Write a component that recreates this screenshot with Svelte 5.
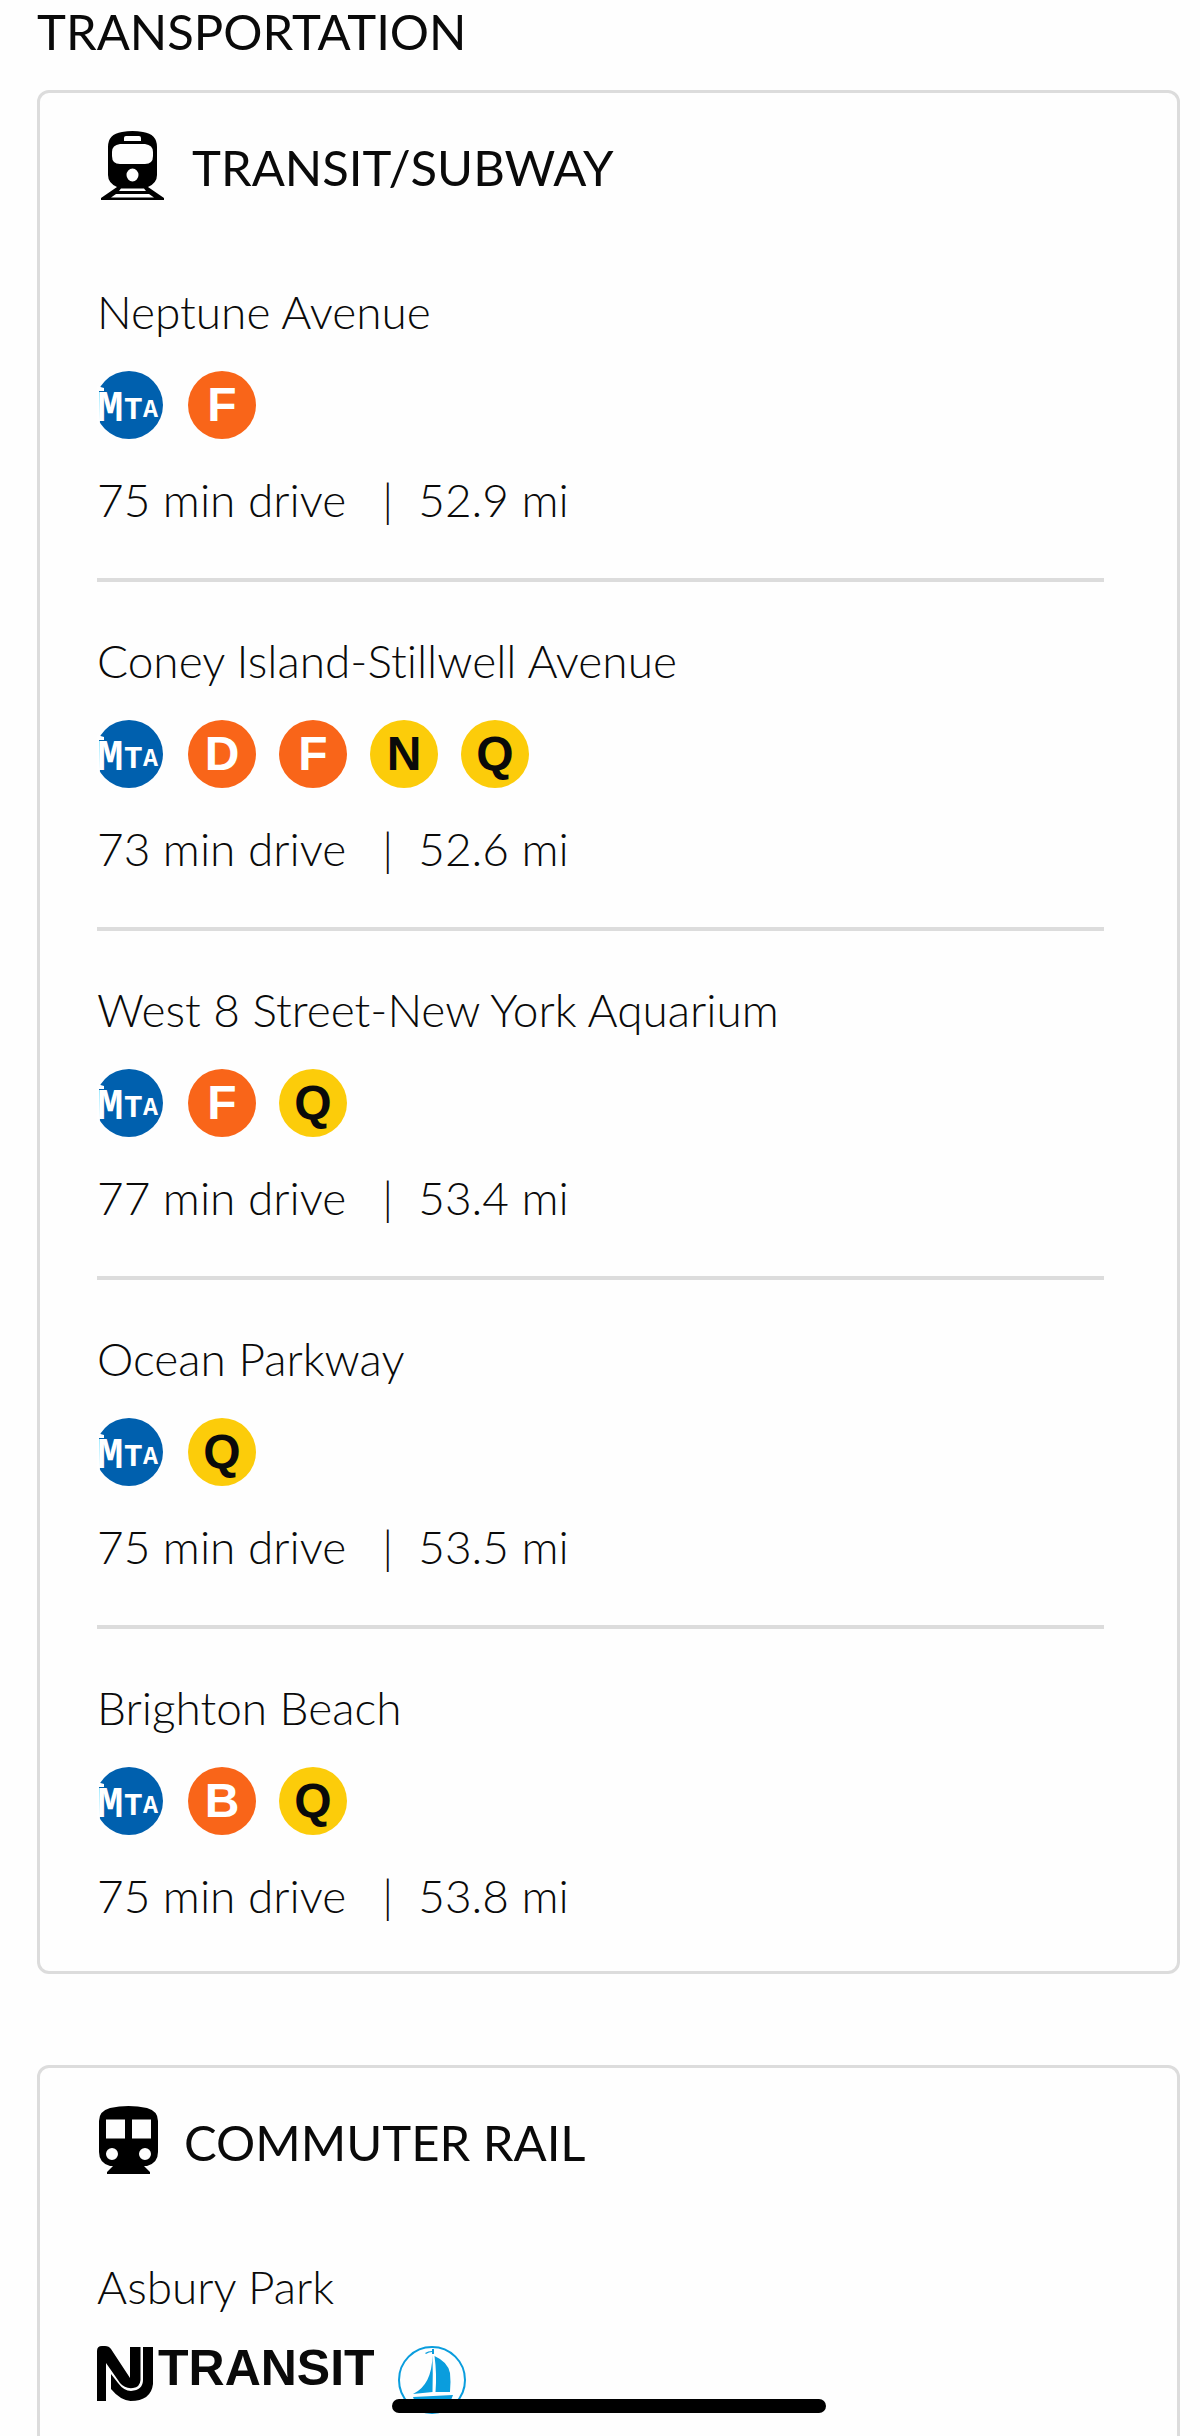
<script lang="ts">
	type Station = { name: string; lines: string[]; minutes: number; miles: string };

	const stations: Station[] = [
		{ name: 'Neptune Avenue', lines: ['F'], minutes: 75, miles: '52.9' },
		{ name: 'Coney Island-Stillwell Avenue', lines: ['D', 'F', 'N', 'Q'], minutes: 73, miles: '52.6' },
		{ name: 'West 8 Street-New York Aquarium', lines: ['F', 'Q'], minutes: 77, miles: '53.4' },
		{ name: 'Ocean Parkway', lines: ['Q'], minutes: 75, miles: '53.5' },
		{ name: 'Brighton Beach', lines: ['B', 'Q'], minutes: 75, miles: '53.8' }
	];

	const yellowLines = ['N', 'Q', 'R', 'W'];
</script>

{#snippet mta()}
	<svg class="mta" viewBox="0 0 68 68" role="img" aria-label="MTA">
		<circle cx="32" cy="34" r="34" fill="#0060ae" />
		<path d="M0 15 L7 17 L7 20 L2 20 L3 50 L2 53 L0 54 Z" fill="#fff" />
		<g class="mta-text" fill="#fff">
			<text x="0" y="50" font-size="44">M</text>
			<text x="27" y="48" font-size="31">T</text>
			<text x="46" y="46" font-size="25">A</text>
		</g>
	</svg>
{/snippet}

<main class="page">
	<h1>TRANSPORTATION</h1>

	<section class="card">
		<header class="card-head">
			<svg class="train" width="63" height="69" viewBox="0 0 63 69" aria-hidden="true">
				<path
					fill-rule="evenodd"
					d="M21 1 Q31.500 -1 42 1 Q56 3 56 16 V44 Q56 52 47 56 L63 67 V69 H0 V67 L16 56 Q7 52 7 44 V16 Q7 3 21 1 Z
					M25 5 Q23 5 23 7 V10 H40 V7 Q40 5 38 5 Z
					M19 13 Q11 14 11 21 V25 Q11 33 19 33 H44 Q52 33 52 25 V21 Q52 14 44 13 Z
					M31.500 37.500 A6 6.500 0 0 0 31.500 50.500 A6 6.500 0 0 0 31.500 37.500 Z
					M20 57.500 L18 60 H45 L43 57.500 Z
					M15 63 L10 66.500 H53 L48 63 Z"
				/>
			</svg>
			<h2>TRANSIT/SUBWAY</h2>
		</header>

		<ul class="stations">
			{#each stations as station (station.name)}
				<li class="station">
					<h3>{station.name}</h3>
					<div class="badges">
						{@render mta()}
						{#each station.lines as line (line)}
							<span class="line" class:yellow={yellowLines.includes(line)}>{line}</span>
						{/each}
					</div>
					<p class="meta">
						<span>{station.minutes} min drive</span>
						<span class="bar">|</span>
						<span>{station.miles} mi</span>
					</p>
				</li>
			{/each}
		</ul>
	</section>

	<section class="card">
		<header class="card-head rail">
			<svg class="train" width="59" height="69" viewBox="0 0 59 69" aria-hidden="true">
				<path
					fill-rule="evenodd"
					d="M11 2 Q29.500 -2 48 2 Q59 5 59 15 V46 Q59 57 48 60 H45 L51 66 V68 H8 V66 L14 60 H11 Q0 57 0 46 V15 Q0 5 11 2 Z
					M7 13.500 V32.500 H26 V13.500 Z
					M33 13.500 V32.500 H52 V13.500 Z
					M13 42 A6 6 0 0 0 13 54 A6 6 0 0 0 13 42 Z
					M46 42 A6 6 0 0 0 46 54 A6 6 0 0 0 46 42 Z"
				/>
			</svg>
			<h2>COMMUTER RAIL</h2>
		</header>

		<ul class="stations">
			<li class="station">
				<h3>Asbury Park</h3>
				<div class="badges">
					<span class="njt">
						<svg width="56" height="56" viewBox="0 0 56 56" role="img" aria-label="NJ">
							<path d="M0 55 V5 Q0 0 5 0 H8 Q12 0 14 3 L33 32 V1 H43.500 V34 Q43 41 36 42 Q28 43 23 37 L9 17 V55 Z" />
							<path d="M46 1 H56 V38 Q54 55 33.500 55 Q23 54 14 43 V28 L21 37 Q27 45 34 45 Q46 44 46 34 Z" />
						</svg>
						<span>TRANSIT</span>
					</span>
					<svg class="ferry" width="68" height="68" viewBox="0 0 68 68" role="img" aria-label="Ferry">
						<circle cx="34" cy="34" r="33" fill="none" stroke="#0a9ddd" stroke-width="2" />
						<g fill="#0a9ddd">
							<path d="M34.500 9 Q35 28 34.500 46 L15 48 Q34 39 34.500 9 Z" />
							<path d="M36.500 10 Q50 16 52 27 Q53 36 52 46 L37.500 46 Q39 28 36.500 10 Z" />
							<path d="M15 51 L55 49 Q53 56 49 61 H19 Z" />
							<path d="M27 7 Q30 5 34 5 V3 H36 V8 H34 V6 Q31 6 28 8 Z" />
						</g>
					</svg>
				</div>
			</li>
		</ul>
	</section>

	<div class="home-bar"></div>
</main>

<style>
	:global(body) {
		background: #fefefe;
	}
	.page {
		position: relative;
		box-sizing: border-box;
		height: 100vh;
		overflow: hidden;
		padding: 0 20px 0 37px;
		font-family: Lato, 'Open Sans', sans-serif;
		font-variant-ligatures: none;
		color: #0a0a0a;
	}
	h1,
	h2,
	h3,
	p,
	ul {
		margin: 0;
		padding: 0;
		font-weight: inherit;
	}
	h1,
	h2 {
		font-size: 49px;
		line-height: 60px;
	}
	h1 {
		padding: 1px 0 29px;
	}
	h2 {
		padding-top: 4px;
	}
	.card {
		border: 3px solid #dcdcdc;
		border-radius: 12px;
		padding: 37px 73px 49px 57px;
		margin-bottom: 91px;
	}
	.card-head {
		display: flex;
		align-items: center;
		gap: 28px;
		height: 70px;
		padding-left: 4px;
	}
	.card-head.rail {
		gap: 26px;
		padding-left: 2px;
	}
	.train {
		fill: #000;
	}
	.stations {
		list-style: none;
		padding-top: 33px;
	}
	.station {
		padding: 53px 0 52px;
		font-size: 46px;
		line-height: 52px;
		font-weight: 300;
		border-bottom: 4px solid #dcdcdc;
	}
	.station:last-child {
		border-bottom: none;
		padding-bottom: 0;
	}
	h3 {
		font-size: 46px;
	}
	.badges {
		display: flex;
		gap: 23px;
		margin: 33px 0 35px;
	}
	.mta {
		width: 68px;
		height: 68px;
	}
	.mta-text {
		font-family: 'Liberation Mono', monospace;
		font-weight: 700;
	}
	.line {
		width: 68px;
		height: 68px;
		border-radius: 50%;
		background: #f96519;
		color: #fff;
		font-family: 'Liberation Sans', Arial, sans-serif;
		font-size: 48px;
		font-weight: 700;
		line-height: 68px;
		text-align: center;
	}
	.line.yellow {
		background: #fccc0a;
		color: #0a0a0a;
	}
	.meta {
		display: flex;
	}
	.bar {
		margin: 0 25px 0 36px;
	}
	.njt {
		display: flex;
		gap: 5px;
		font-family: 'Liberation Sans', Arial, sans-serif;
		font-size: 50px;
		font-weight: 700;
		line-height: 44px;
	}
	.home-bar {
		position: absolute;
		left: 392px;
		right: 374px;
		bottom: 23px;
		height: 14px;
		border-radius: 7px;
		background: #000;
	}
</style>
